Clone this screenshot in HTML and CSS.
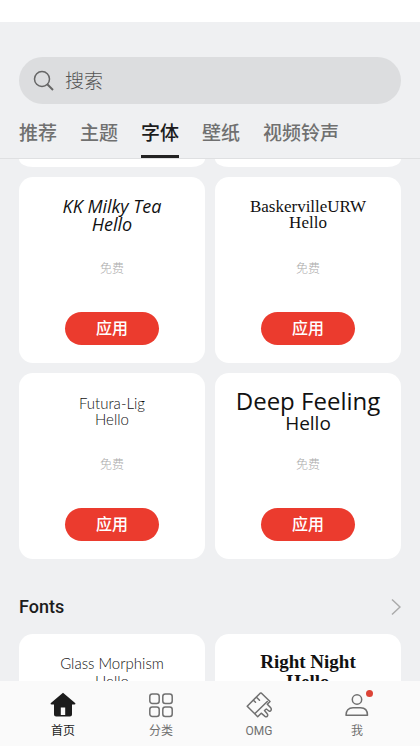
FILE: index.html
```html
<!DOCTYPE html>
<html lang="zh-CN">
<head>
<meta charset="utf-8">
<meta name="viewport" content="width=device-width, initial-scale=1">
<title>字体</title>
<link rel="stylesheet" href="styles.css">
</head>
<body>
<div class="app">
  <header class="header">
    <label class="search">
      <svg class="search-icon" viewBox="0 0 22 22" aria-hidden="true"><circle cx="9" cy="9" r="7.5"/><path d="M14 14l6 6" stroke-width="2"/></svg>
      <input type="search" placeholder="搜索" aria-label="搜索">
    </label>
    <nav class="tabs">
      <a href="#recommend">推荐</a>
      <a href="#themes">主题</a>
      <a href="#fonts" class="active" aria-current="page">字体</a>
      <a href="#wallpapers">壁纸</a>
      <a href="#ringtones">视频铃声</a>
    </nav>
  </header>

  <main class="content">
    <div class="grid">
      <div class="card-end"></div>
      <div class="card-end"></div>
      <article class="card">
        <div class="sample milky"><span>KK Milky Tea</span><span class="hello">Hello</span></div>
        <p class="price">免费</p>
        <button class="apply" type="button">应用</button>
      </article>
      <article class="card">
        <div class="sample baskerville"><span>BaskervilleURW</span><span class="hello">Hello</span></div>
        <p class="price">免费</p>
        <button class="apply" type="button">应用</button>
      </article>
      <article class="card">
        <div class="sample futura"><span>Futura-Lig</span><span class="hello">Hello</span></div>
        <p class="price">免费</p>
        <button class="apply" type="button">应用</button>
      </article>
      <article class="card">
        <div class="sample deep"><span>Deep Feeling</span><span class="hello">Hello</span></div>
        <p class="price">免费</p>
        <button class="apply" type="button">应用</button>
      </article>
    </div>

    <div class="section-head">
      <h2>Fonts</h2>
      <a href="#more" aria-label="Fonts">
        <svg class="chevron" viewBox="0 0 10 18" aria-hidden="true"><path d="M1 1.500l8 7.500-8 7.500"/></svg>
      </a>
    </div>

    <div class="grid">
      <article class="card">
        <div class="sample glass"><span>Glass Morphism</span><span class="hello">Hello</span></div>
      </article>
      <article class="card">
        <div class="sample night"><span>Right Night</span><span class="hello">Hello</span></div>
      </article>
    </div>
  </main>

  <nav class="bottom-nav">
    <a href="#home" class="active" aria-current="page">
      <svg viewBox="0 0 26 26" aria-hidden="true"><path class="solid" fill-rule="evenodd" d="M13 .8 25.400 11.200Q25.600 12.400 24.300 12.400H22V22.500Q22 24.600 19.900 24.600H6.100Q4 24.600 4 22.500V12.400H1.700Q.4 12.400.6 11.200ZM10.800 15.500V23H15.200V15.500Z"/></svg>
      <span>首页</span>
    </a>
    <a href="#categories">
      <svg viewBox="0 0 26 26" aria-hidden="true"><rect x="1.800" y="2" width="9.400" height="9.400" rx="2.500"/><rect x="14.800" y="2" width="9.400" height="9.400" rx="2.500"/><rect x="1.800" y="15" width="9.400" height="9.400" rx="2.500"/><rect x="14.800" y="15" width="9.400" height="9.400" rx="2.500"/></svg>
      <span>分类</span>
    </a>
    <a href="#omg">
      <svg viewBox="0 0 26 26" aria-hidden="true"><path d="M14.200 1.200 1.200 14.200 11.700 24.700 15.200 21.200 19 24.300C21.200 26 22.500 23 21 21.500L18.500 18.500 20.300 17 23 19C25 20 26 17 24.500 15.500L21.300 12.200 24 9.500 15.500 1.200Q14.800.7 14.200 1.200ZM8.700 21.700 21.300 9.500M10.500 5.200 13.500 8.200M7.500 8.200 9.500 10.200"/></svg>
      <span>OMG</span>
    </a>
    <a href="#me">
      <span class="icon-wrap">
        <svg viewBox="0 0 26 26" aria-hidden="true"><circle cx="13" cy="7.500" r="4.700"/><path d="M2 23.200C2 18.500 4.500 15.700 9 15.700H16.500C21 15.700 23.500 18.500 23.500 23.200Z"/></svg>
        <i class="dot"></i>
      </span>
      <span>我</span>
    </a>
  </nav>
</div>
</body>
</html>
```
FILE: styles.css
```css
* { box-sizing: border-box; }

body {
  margin: 0;
  background: #eff0f2;
  color: #1c1c1c;
  font-family: Roboto, "Noto Sans CJK SC", sans-serif;
}

a { color: inherit; text-decoration: none; }

.app {
  display: flex;
  flex-direction: column;
  height: 100vh;
  overflow: hidden;
}

.header {
  flex: none;
  padding: 35px 19px 0;
  border-top: 22px solid #fff;
  border-bottom: 1px solid #dfe0e2;
}

.search {
  display: flex;
  align-items: center;
  gap: 10px;
  height: 47px;
  padding: 0 14px;
  border-radius: 24px;
  background: #dcdddf;
}

.search-icon {
  flex: none;
  width: 22px;
  height: 22px;
  fill: none;
  stroke: #666;
  stroke-width: 1.5;
}

.search input {
  flex: 1;
  min-width: 0;
  padding: 2px 0 0;
  border: 0;
  outline: 0;
  background: transparent;
  font: 300 19px/28px Roboto, "Noto Sans CJK SC", sans-serif;
}

.search input::placeholder { color: #555; opacity: 1; }

.tabs {
  display: flex;
  gap: 23px;
  height: 54px;
  color: #707070;
  font-size: 19px;
  font-weight: 500;
  line-height: 28px;
  white-space: nowrap;
}

.tabs a { padding-top: 16px; }

.tabs .active {
  border-bottom: 3px solid #222;
  color: #1c1c1c;
}

.content {
  flex: 1;
  min-height: 0;
  padding: 0 19px;
  overflow: hidden;
}

.grid {
  display: grid;
  grid-template-columns: 1fr 1fr;
  gap: 10px;
}

.card-end {
  height: 8px;
  border-radius: 0 0 14px 14px / 0 0 8px 8px;
  background: #fff;
}

.card {
  display: flex;
  flex-direction: column;
  align-items: center;
  aspect-ratio: 1;
  border-radius: 14px;
  background: #fff;
}

.sample {
  display: flex;
  flex-direction: column;
  align-items: center;
  justify-content: center;
  height: 76px;
  color: #111;
  font-size: 17px;
  line-height: 16px;
  white-space: nowrap;
}

.milky { font-family: "Open Sans", sans-serif; font-style: italic; font-size: 18px; line-height: 18px; }
.baskerville { font-family: "Liberation Serif", serif; }
.futura { font-family: Lato, sans-serif; font-weight: 300; font-size: 15px; }
.deep { font-family: "Open Sans", sans-serif; font-size: 24px; line-height: 24px; }
.deep .hello { font-size: 19px; line-height: 20px; }
.glass { font-family: Lato, sans-serif; font-weight: 300; font-size: 15px; line-height: 18px; }
.night { font-family: "Liberation Serif", serif; font-weight: 700; font-size: 19px; line-height: 20px; }

.price {
  margin: 8px 0 35px;
  color: #aaa;
  font-size: 12px;
  font-weight: 300;
  line-height: 16px;
}

.apply {
  width: 94px;
  height: 33px;
  padding: 0;
  border: 0;
  border-radius: 17px;
  background: #eb3b2e;
  color: #fff;
  font: 500 16px/24px Roboto, "Noto Sans CJK SC", sans-serif;
}

.section-head {
  display: flex;
  align-items: center;
  justify-content: space-between;
  height: 75px;
  padding-top: 20px;
}

.section-head h2 {
  margin: 0;
  font-size: 18px;
  font-weight: 500;
  line-height: 24px;
}

.chevron {
  display: block;
  width: 10px;
  height: 18px;
  fill: none;
  stroke: #aaa;
  stroke-width: 1.5;
}

.bottom-nav {
  display: grid;
  grid-template-columns: repeat(4, 1fr);
  flex: none;
  height: 65px;
  padding: 11px 14px 0;
  background: #fafafa;
  color: #707070;
  font-size: 12px;
  line-height: 16px;
}

.bottom-nav a {
  display: flex;
  flex-direction: column;
  align-items: center;
  gap: 5px;
}

.bottom-nav .active { color: #1c1c1c; }

.bottom-nav svg {
  display: block;
  width: 26px;
  height: 26px;
  fill: none;
  stroke: currentColor;
  stroke-width: 1.5;
  stroke-linejoin: round;
  stroke-linecap: round;
}

.bottom-nav .solid { fill: currentColor; stroke: none; }

.icon-wrap { position: relative; }

.dot {
  position: absolute;
  top: -2px;
  right: -3px;
  width: 7px;
  height: 7px;
  border-radius: 50%;
  background: #dc4437;
}
```
